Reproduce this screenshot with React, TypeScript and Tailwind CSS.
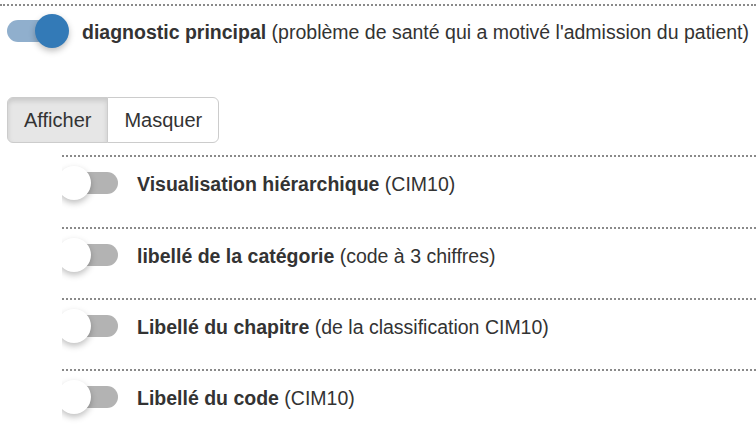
import React, { useState } from 'react';

type SwitchProps = { on: boolean; onToggle: () => void };

function Switch({ on, onToggle }: SwitchProps) {
  return (
    <button type="button" onClick={onToggle} className="relative block h-[34px] w-[66px] shrink-0">
      <span
        className={
          'absolute left-[5px] top-[6px] h-[22px] w-[56px] rounded-full ' +
          (on ? 'bg-[#90afcd]' : 'bg-[#b3b3b3]')
        }
      />
      <span
        className={
          'absolute top-0 h-[34px] w-[34px] rounded-full shadow-[0_3px_6px_rgba(0,0,0,0.25)] ' +
          (on ? 'left-[33px] bg-[#337ab7]' : 'left-0 bg-white')
        }
      />
    </button>
  );
}

const subItems = [
  { key: 'hier', bold: 'Visualisation hiérarchique', rest: '(CIM10)' },
  { key: 'cat', bold: 'libellé de la catégorie', rest: '(code à 3 chiffres)' },
  { key: 'chap', bold: 'Libellé du chapitre', rest: '(de la classification CIM10)' },
  { key: 'code', bold: 'Libellé du code', rest: '(CIM10)' }
];

export default function App() {
  const [main, setMain] = useState(true);
  const [show, setShow] = useState(true);
  const [subs, setSubs] = useState<Record<string, boolean>>({});

  return (
    <div className="min-h-[437px] bg-white text-[#333] font-['Liberation_Sans',Arial,sans-serif] text-[19.5px]">
      <div className="mt-[4px] border-t-2 border-dotted border-[#8a8a8a]">
        <div className="flex items-center pl-[2px] pt-[8px]">
          <Switch on={main} onToggle={() => setMain(!main)} />
          <div className="ml-[14px] mt-[3px] whitespace-nowrap">
            <span className="font-bold">diagnostic principal</span> (problème de santé qui a motivé l'admission du patient)
          </div>
        </div>
      </div>

      <div className="ml-[7px] mt-[49px] inline-flex text-[20px]">
        <button
          type="button"
          onClick={() => setShow(true)}
          className={
            'rounded-l-[6px] border border-[#ccc] px-[16px] py-[10px] leading-[24px] ' +
            (show ? 'bg-[#e6e6e6] shadow-[inset_0_3px_5px_rgba(0,0,0,0.125)] border-[#adadad]' : 'bg-white')
          }
        >
          Afficher
        </button>
        <button
          type="button"
          onClick={() => setShow(false)}
          className={
            '-ml-px rounded-r-[6px] border border-[#ccc] px-[16px] py-[10px] leading-[24px] ' +
            (!show ? 'bg-[#e6e6e6] shadow-[inset_0_3px_5px_rgba(0,0,0,0.125)] border-[#adadad]' : 'bg-white')
          }
        >
          Masquer
        </button>
      </div>

      {show && (
        <div className="ml-[62px] mt-[12px]">
          {subItems.map((item, i) => (
            <div
              key={item.key}
              className={
                'overflow-hidden border-t-2 border-dotted border-[#8a8a8a] ' + (i === 0 ? 'h-[72px]' : 'h-[71px]')
              }
            >
              <div className="flex items-center pt-[9px]">
                <div className="-ml-[5px]">
                  <Switch
                    on={!!subs[item.key]}
                    onToggle={() => setSubs(prev => ({ ...prev, [item.key]: !prev[item.key] }))}
                  />
                </div>
                <div className="ml-[14px] mt-[3px] whitespace-nowrap">
                  <span className="font-bold">{item.bold}</span> {item.rest}
                </div>
              </div>
            </div>
          ))}
        </div>
      )}
    </div>
  );
}
